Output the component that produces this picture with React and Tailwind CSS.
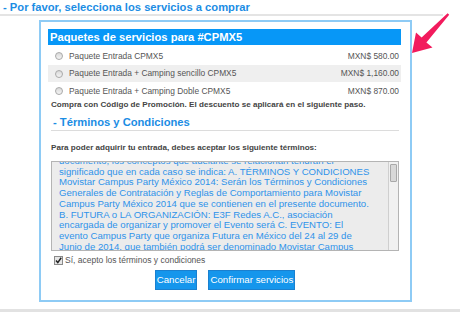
export default function App() {
  const lines = [
    "documento, los conceptos que adelante se relacionan tendrán el",
    "significado que en cada caso se indica: A. TÉRMINOS Y CONDICIONES",
    "Movistar Campus Party México 2014: Serán los Términos y Condiciones",
    "Generales de Contratación y Reglas de Comportamiento para Movistar",
    "Campus Party México 2014 que se contienen en el presente documento.",
    "B. FUTURA o LA ORGANIZACIÓN: E3F Redes A.C., asociación",
    "encargada de organizar y promover el Evento será C. EVENTO: El",
    "evento Campus Party que organiza Futura en México del 24 al 29 de",
    "Junio de 2014, que también podrá ser denominado Movistar Campus",
  ];
  const rows = [
    ["Paquete Entrada CPMX5", "MXN$ 580.00", false],
    ["Paquete Entrada + Camping sencillo CPMX5", "MXN$ 1,160.00", true],
    ["Paquete Entrada + Camping Doble CPMX5", "MXN$ 870.00", false],
  ];
  return (
    <div className="relative w-[460px] h-[312px] overflow-hidden bg-white font-['Liberation_Sans',Arial,sans-serif]">
      <div className="pt-[1px] pl-[3px] text-[11.2px] leading-[13px] font-bold text-[#1b8de4] whitespace-nowrap">
        - Por favor, selecciona los servicios a comprar
      </div>
      <div className="h-[2px] w-[443px] bg-[#e4e4e4]" />
      <div className="mt-[4px] ml-[39px] w-[373px] border-2 border-[#8ecbf5] pl-[7px] pr-[9px] pt-[7px] pb-[10px]">
        <div className="h-[16px] bg-[#0797f7] text-white font-bold text-[11.2px] leading-[16px] pl-[2px] whitespace-nowrap">
          Paquetes de servicios para #CPMX5
        </div>
        <div className="mt-[2px]">
          {rows.map(([label, price, gray], i) => (
            <div
              key={i}
              className={`h-[17.5px] flex items-center pt-[1px] pr-[2px] ${gray ? "bg-[#efefef]" : ""}`}
            >
              <div className="ml-[7px] w-[8px] h-[8px] rounded-full border border-[#a9a9a9] bg-gradient-to-b from-[#d9d9d9] to-[#f4f4f4]" />
              <div className="ml-[6px] text-[8.4px] text-[#555] whitespace-nowrap">{label}</div>
              <div className="ml-auto text-[8.4px] text-[#555] whitespace-nowrap">{price}</div>
            </div>
          ))}
        </div>
        <div className="mt-[0.5px] pl-[3px] text-[8.1px] leading-[10px] font-bold text-[#444] whitespace-nowrap">
          Compra con Código de Promoción. El descuento se aplicará en el siguiente paso.
        </div>
        <div className="mt-[5px] pl-[5px] text-[11.2px] leading-[14px] font-bold text-[#1b8de4] whitespace-nowrap">
          - Términos y Condiciones
        </div>
        <div className="mt-[1px] ml-[3px] mr-[2px] h-[1px] bg-[#dcdcdc]" />
        <div className="mt-[12px] pl-[3px] text-[8.1px] leading-[10px] font-bold text-[#444] whitespace-nowrap">
          Para poder adquirir tu entrada, debes aceptar los siguiente términos:
        </div>
        <div className="mt-[8px] ml-[3px] mr-[2px] h-[90px] border border-[#b4b4b4] bg-[#ececec] flex overflow-hidden">
          <div className="flex-1 overflow-hidden pl-[7px]">
            <div className="mt-[-6px] text-[9.6px] leading-[10.7px] text-[#2f93ea] whitespace-nowrap">
              {lines.map((l, i) => (
                <div key={i}>{l}</div>
              ))}
            </div>
          </div>
          <div className="w-[10px] border-l border-[#cfcfcf] bg-[#f1f1f1] pt-[2px] flex justify-center">
            <div className="w-[7px] h-[18px] rounded-[1px] border border-[#a9a9a9] bg-[#d8d8d8]" />
          </div>
        </div>
        <div className="mt-[4px] ml-[6px] flex items-center h-[10px]">
          <svg width="9" height="9" viewBox="0 0 9 9">
            <rect x="0.5" y="0.5" width="8" height="8" fill="#e6e6e6" stroke="#8a8a8a" />
            <path d="M2 4.5 L3.8 6.6 L7.2 1.8" fill="none" stroke="#222" strokeWidth="1.5" />
          </svg>
          <div className="ml-[2px] text-[8.5px] text-[#555] whitespace-nowrap">
            Sí, acepto los términos y condiciones
          </div>
        </div>
        <div className="mt-[5px] flex justify-center gap-[11px] pl-[1px]">
          <div className="h-[20px] px-[1px] border border-[#1a80cf] bg-[#1596ec] text-white text-[9.7px] leading-[18px] whitespace-nowrap">
            Cancelar
          </div>
          <div className="h-[20px] px-[1px] border border-[#1a80cf] bg-[#1596ec] text-white text-[9.7px] leading-[18px] whitespace-nowrap">
            Confirmar servicios
          </div>
        </div>
      </div>
      <div className="mt-[7px] h-[3px] bg-[#e2e2e2]" />
      <svg
        className="absolute left-0 top-0 pointer-events-none"
        width="460"
        height="312"
        viewBox="0 0 460 312"
      >
        <path
          d="M447.6 13.2 L449.2 14.8 L426.4 42.4 L432.5 47.5 L412 53 L416 32.5 L421.6 37.6 Z"
          fill="#f21b5d"
        />
      </svg>
    </div>
  );
}
